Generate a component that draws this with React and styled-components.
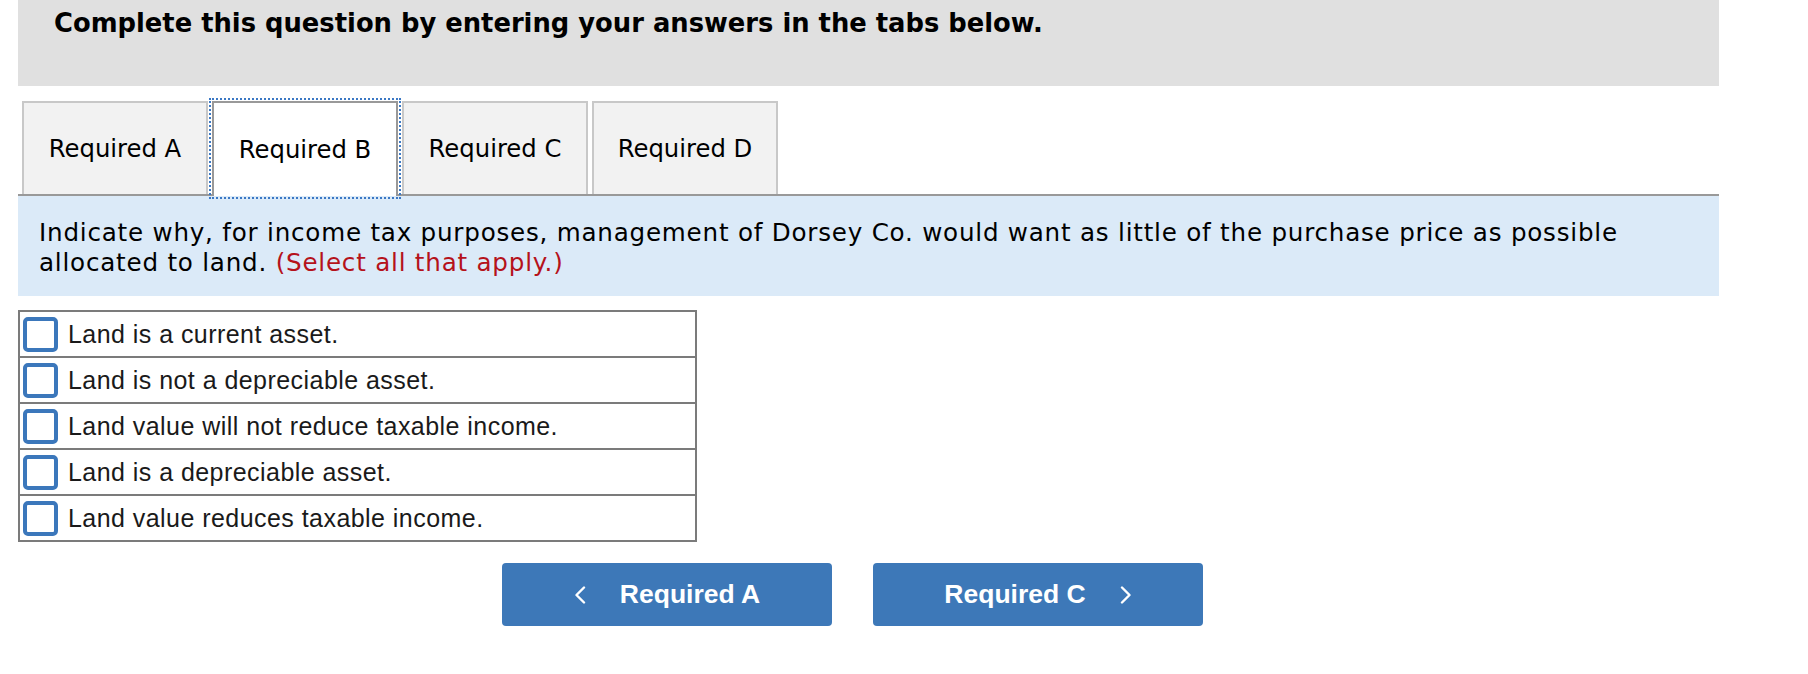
import React, { useState } from "react";
import styled, { createGlobalStyle } from "styled-components";

const GlobalStyle = createGlobalStyle`
  html, body {
    margin: 0;
    padding: 0;
    background: #ffffff;
  }
`;

const tabs = ["Required A", "Required B", "Required C", "Required D"];

const options = [
  "Land is a current asset.",
  "Land is not a depreciable asset.",
  "Land value will not reduce taxable income.",
  "Land is a depreciable asset.",
  "Land value reduces taxable income.",
];

const Chevron = ({ dir }) => (
  <svg width="12" height="18" viewBox="0 0 12 18" fill="none">
    <polyline
      points={dir === "left" ? "10,1.5 2.5,9 10,16.5" : "2,1.5 9.5,9 2,16.5"}
      stroke="#ffffff"
      strokeWidth="2.4"
      strokeLinecap="round"
      strokeLinejoin="round"
    />
  </svg>
);

const App = () => {
  const [active, setActive] = useState(1); // 현재 탭
  const [checked, setChecked] = useState([]); // 체크된 항목

  const toggle = (i) => {
    setChecked(checked.includes(i) ? checked.filter((c) => c !== i) : [...checked, i]);
  };

  return (
    <Page>
      <GlobalStyle />
      <Header>
        <HeaderText>Complete this question by entering your answers in the tabs below.</HeaderText>
      </Header>

      <TabRow>
        {tabs.map((t, i) => (
          <Tab key={t} isActive={i === active} onClick={() => setActive(i)}>
            {t}
          </Tab>
        ))}
      </TabRow>

      <Instructions>
        <Line>
          Indicate why, for income tax purposes, management of Dorsey Co. would want as little of
          the purchase price as possible
        </Line>
        <Line>
          allocated to land. <Red>(Select all that apply.)</Red>
        </Line>
      </Instructions>

      <Options>
        {options.map((o, i) => (
          <OptionRow key={o} isLast={i === options.length - 1} onClick={() => toggle(i)}>
            <Box isChecked={checked.includes(i)} />
            <OptionText>{o}</OptionText>
          </OptionRow>
        ))}
      </Options>

      <NavRow>
        <NavButton>
          <Chevron dir="left" />
          <span>Required A</span>
        </NavButton>
        <NavButton>
          <span>Required C</span>
          <Chevron dir="right" />
        </NavButton>
      </NavRow>
    </Page>
  );
};

export default App;

const Page = styled.div`
  width: 1701px;
  margin-left: 18px;
  font-family: "DejaVu Sans", Verdana, sans-serif;
  color: #000000;
`;

const Header = styled.div`
  height: 86px;
  background-color: #e0e0e0;
  padding: 8px 0 0 36px;
  box-sizing: border-box;
`;

const HeaderText = styled.div`
  font-size: 25.8px;
  font-weight: bold;
  line-height: 30px;
`;

const TabRow = styled.div`
  display: flex;
  gap: 4px;
  margin-top: 15px;
  padding-left: 4px;
  border-bottom: 2px solid #999999;
`;

const Tab = styled.div`
  width: 186px;
  box-sizing: border-box;
  display: flex;
  align-items: center;
  justify-content: center;
  font-size: 24.3px;
  cursor: pointer;
  border: 2px solid ${({ isActive }) => (isActive ? "#999999" : "#c8c8c8")};
  border-bottom: none;
  background-color: ${({ isActive }) => (isActive ? "#ffffff" : "#f2f2f2")};
  margin-bottom: ${({ isActive }) => (isActive ? "-2px" : "0")};
  height: ${({ isActive }) => (isActive ? "95px" : "93px")};
  outline: ${({ isActive }) => (isActive ? "2px dotted #3b78c4" : "none")};
  outline-offset: 1px;
  position: relative;
`;

const Instructions = styled.div`
  background-color: #dbeaf8;
  padding: 22px 21px 18px;
  font-size: 24.6px;
  letter-spacing: 0.78px;
`;

const Line = styled.div`
  height: 30px;
  line-height: 30px;
  white-space: nowrap;
`;

const Red = styled.span`
  color: #b5121b;
`;

const Options = styled.div`
  width: 675px;
  margin-top: 14px;
  border: 2px solid #7b7b7b;
  font-family: "Liberation Sans", Arial, sans-serif;
`;

const OptionRow = styled.div`
  height: 44px;
  display: flex;
  align-items: center;
  gap: 10px;
  padding-left: 3px;
  border-bottom: ${({ isLast }) => (isLast ? "none" : "2px solid #7b7b7b")};
  cursor: pointer;
`;

const Box = styled.div`
  width: 35px;
  height: 35px;
  flex-shrink: 0;
  box-sizing: border-box;
  border: 4px solid #3b77bb;
  border-radius: 5px;
  background-color: ${({ isChecked }) => (isChecked ? "#3b77bb" : "#ffffff")};
`;

const OptionText = styled.span`
  font-size: 25px;
  letter-spacing: 0.45px;
  color: #1a1a1a;
`;

const NavRow = styled.div`
  display: flex;
  gap: 41px;
  margin-top: 21px;
  padding-left: 484px;
`;

const NavButton = styled.div`
  width: 330px;
  height: 63px;
  box-sizing: border-box;
  display: flex;
  align-items: center;
  justify-content: center;
  gap: 34px;
  background-color: #3d78b8;
  border-radius: 4px;
  color: #ffffff;
  font-family: "Liberation Sans", Arial, sans-serif;
  font-weight: bold;
  font-size: 26.5px;
  cursor: pointer;
`;
